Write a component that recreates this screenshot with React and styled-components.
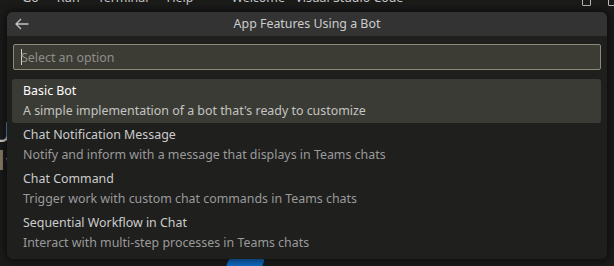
import React from "react";
import styled, { createGlobalStyle } from "styled-components";

const Global = createGlobalStyle`
  html, body { margin: 0; padding: 0; background: #1b1b1a; }
  body { width: 614px; height: 266px; overflow: hidden; font-family: "Noto Sans", "Open Sans", sans-serif; }
`;

const Workbench = styled.div`
  position: relative;
  width: 614px;
  height: 266px;
  overflow: hidden;
  background: #1b1b1a;
`;

const MenuBar = styled.div`
  display: flex;
  align-items: center;
  height: 20px;
  margin-top: -13px;
  font-size: 12.4px;
  color: #c8c8c8;
  white-space: nowrap;
`;

const MenuItem = styled.span`
  flex-shrink: 0;
  padding: 0 ${(p) => p.$pad ?? 9}px;
  margin-left: ${(p) => p.$ml || 0}px;
`;

const Controls = styled.div`
  display: flex;
  gap: 17px;
  margin-left: auto;
  margin-right: -3px;
  padding-top: 8px;
`;

const LayoutIcon = styled.span`
  width: 9px;
  height: 9px;
  border: 1px solid #bbb;
  border-radius: 1px;
  box-sizing: border-box;
`;

const Editor = styled.div`
  display: flex;
  flex-direction: column;
  padding: 108px 0 0 0;
  color: #cccccc;
`;

const BigLetter = styled.div`
  font-size: 28px;
  line-height: 32px;
  margin-left: -9px;
  color: #d0d0d0;
`;

const SideMark = styled.div`
  display: flex;
  align-items: center;
  gap: 3px;
  height: 20px;
  margin-top: 3px;
  font-size: 13px;
  color: #aaa;
`;

const Bar = styled.span`
  width: 3px;
  height: 20px;
  background: #8a7a66;
`;

const BlueTab = styled.div`
  width: 36px;
  height: 10px;
  margin: 89px 0 0 227px;
  background: #0e6bc4;
  transform: skewX(-20deg);
  border-radius: 2px 2px 0 0;
`;

const QuickPick = styled.div`
  position: absolute;
  top: 12px;
  left: 7px;
  width: 600px;
  height: 247px;
  background: #1f1f1e;
  border-radius: 6px;
  box-shadow: 0 0 8px 2px rgba(0, 0, 0, 0.55);
  display: flex;
  flex-direction: column;
  overflow: hidden;
`;

const Header = styled.div`
  height: 24px;
  background: #333333;
  display: grid;
  grid-template-columns: 26px 1fr 26px;
  align-items: center;
  color: #cccccc;
  font-size: 12.4px;
`;

const BackButton = styled.div`
  display: flex;
  align-items: center;
  justify-content: center;
  padding-left: 3px;
  color: #c5c5c5;
`;

const Title = styled.div`
  text-align: center;
  line-height: 24px;
`;

const InputWrap = styled.div`
  padding: 8px 6px 9px 6px;
`;

const Input = styled.div`
  height: 24px;
  background: #3c3c35;
  border: 1px solid #8a8a78;
  border-radius: 2px;
  display: flex;
  align-items: center;
  padding-left: 7px;
  font-size: 12.4px;
  color: #8f8f8a;
`;

const Caret = styled.span`
  display: inline-block;
  width: 1px;
  height: 16px;
  background: #d0d0d0;
  margin-right: -1px;
`;

const List = styled.div`
  display: flex;
  flex-direction: column;
  padding: 0 6px 0 5px;
`;

const Row = styled.div`
  height: 44px;
  padding: 2px 0 0 11px;
  box-sizing: border-box;
  border-radius: 3px;
  background: ${(p) => (p.$active ? "#3b3b35" : "transparent")};
`;

const RowTitle = styled.div`
  font-size: 12.4px;
  line-height: 20px;
  color: ${(p) => (p.$active ? "#ffffff" : "#cccccc")};
`;

const RowDesc = styled.div`
  font-size: 12.4px;
  line-height: 20px;
  color: ${(p) => (p.$active ? "#c4c4c0" : "#9a9a9a")};
`;

const items = [
  ["Basic Bot", "A simple implementation of a bot that's ready to customize"],
  ["Chat Notification Message", "Notify and inform with a message that displays in Teams chats"],
  ["Chat Command", "Trigger work with custom chat commands in Teams chats"],
  ["Sequential Workflow in Chat", "Interact with multi-step processes in Teams chats"],
];

export default function App() {
  return (
    <Workbench>
      <Global />
      <MenuBar>
        <MenuItem $pad={0} $ml={-4}>r</MenuItem>
        <MenuItem $ml={12}>Go</MenuItem>
        <MenuItem>Run</MenuItem>
        <MenuItem>Terminal</MenuItem>
        <MenuItem>Help</MenuItem>
        <MenuItem $ml={20}>Welcome - Visual Studio Code</MenuItem>
        <Controls>
          <LayoutIcon />
          <LayoutIcon />
        </Controls>
      </MenuBar>
      <Editor>
        <BigLetter>U</BigLetter>
        <SideMark>
          <Bar />v
        </SideMark>
        <BlueTab />
      </Editor>
      <QuickPick>
        <Header>
          <BackButton>
            <svg width="16" height="16" viewBox="0 0 16 16" fill="none" stroke="currentColor" strokeWidth="1.3">
              <path d="M14.5 8H2M7 3L2 8l5 5" />
            </svg>
          </BackButton>
          <Title>App Features Using a Bot</Title>
          <span />
        </Header>
        <InputWrap>
          <Input>
            <Caret />
            Select an option
          </Input>
        </InputWrap>
        <List>
          {items.map(([t, d], i) => (
            <Row key={t} $active={i === 0}>
              <RowTitle $active={i === 0}>{t}</RowTitle>
              <RowDesc $active={i === 0}>{d}</RowDesc>
            </Row>
          ))}
        </List>
      </QuickPick>
    </Workbench>
  );
}
